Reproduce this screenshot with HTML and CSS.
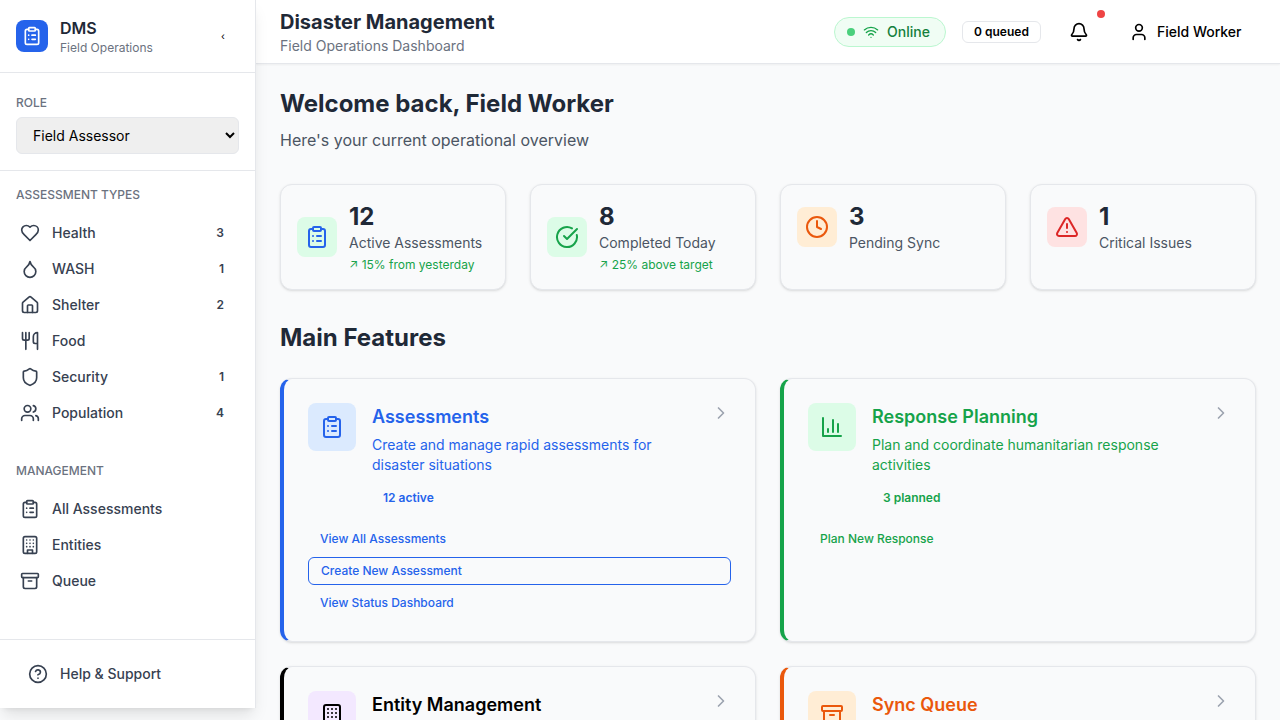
FILE: index.html
```html
<!DOCTYPE html>
<html lang="en">
<head>
<meta charset="utf-8">
<meta name="viewport" content="width=device-width, initial-scale=1">
<title>Disaster Management</title>
<link rel="stylesheet" href="styles.css">
</head>
<body>
<svg class="sprite" aria-hidden="true">
  <symbol id="clipboard" viewBox="0 0 24 24"><rect width="8" height="4" x="8" y="2" rx="1"/><path d="M16 4h2a2 2 0 0 1 2 2v14a2 2 0 0 1-2 2H6a2 2 0 0 1-2-2V6a2 2 0 0 1 2-2h2M12 11h4M12 16h4M8 11h.01M8 16h.01"/></symbol>
  <symbol id="heart" viewBox="0 0 24 24"><path d="M19 14c1.49-1.46 3-3.21 3-5.5A5.5 5.5 0 0 0 16.5 3c-1.76 0-3 .5-4.5 2-1.5-1.5-2.74-2-4.5-2A5.5 5.5 0 0 0 2 8.5c0 2.3 1.5 4.05 3 5.5l7 7Z"/></symbol>
  <symbol id="droplet" viewBox="0 0 24 24"><path d="M12 22a7 7 0 0 0 7-7c0-2-1-3.9-3-5.5s-3.5-4-4-6.5c-.5 2.5-2 4.9-4 6.5C6 11.1 5 13 5 15a7 7 0 0 0 7 7z"/></symbol>
  <symbol id="house" viewBox="0 0 24 24"><path d="M15 21v-8a1 1 0 0 0-1-1h-4a1 1 0 0 0-1 1v8"/><path d="M3 10a2 2 0 0 1 .709-1.528l7-5.999a2 2 0 0 1 2.582 0l7 5.999A2 2 0 0 1 21 10v9a2 2 0 0 1-2 2H5a2 2 0 0 1-2-2z"/></symbol>
  <symbol id="utensils" viewBox="0 0 24 24"><path d="M3 2v7c0 1.1.9 2 2 2h4a2 2 0 0 0 2-2V2M7 2v20M21 15V2a5 5 0 0 0-5 5v6c0 1.1.9 2 2 2h3Zm0 0v7"/></symbol>
  <symbol id="shield" viewBox="0 0 24 24"><path d="M20 13c0 5-3.5 7.5-7.66 8.95a1 1 0 0 1-.67-.01C7.5 20.5 4 18 4 13V6a1 1 0 0 1 1-1c2 0 4.5-1.2 6.24-2.72a1.17 1.17 0 0 1 1.52 0C14.51 3.81 17 5 19 5a1 1 0 0 1 1 1z"/></symbol>
  <symbol id="users" viewBox="0 0 24 24"><path d="M16 21v-2a4 4 0 0 0-4-4H6a4 4 0 0 0-4 4v2M22 21v-2a4 4 0 0 0-3-3.87M16 3.13a4 4 0 0 1 0 7.75"/><circle cx="9" cy="7" r="4"/></symbol>
  <symbol id="building" viewBox="0 0 24 24"><rect width="16" height="20" x="4" y="2" rx="2"/><path d="M9 22v-4h6v4M8 6h.01M16 6h.01M12 6h.01M12 10h.01M12 14h.01M16 10h.01M16 14h.01M8 10h.01M8 14h.01"/></symbol>
  <symbol id="archive" viewBox="0 0 24 24"><rect width="20" height="5" x="2" y="3" rx="1"/><path d="M4 8v11a2 2 0 0 0 2 2h12a2 2 0 0 0 2-2V8M10 12h4"/></symbol>
  <symbol id="help" viewBox="0 0 24 24"><circle cx="12" cy="12" r="10"/><path d="M9.09 9a3 3 0 0 1 5.83 1c0 2-3 3-3 3M12 17h.01"/></symbol>
  <symbol id="wifi" viewBox="0 0 24 24"><path d="M12 20h.01M2 8.82a15 15 0 0 1 20 0M5 12.859a10 10 0 0 1 14 0M8.5 16.429a5 5 0 0 1 7 0"/></symbol>
  <symbol id="bell" viewBox="0 0 24 24"><path d="M10.268 21a2 2 0 0 0 3.464 0M3.262 15.326A1 1 0 0 0 4 17h16a1 1 0 0 0 .74-1.673C19.41 13.956 18 12.499 18 8A6 6 0 0 0 6 8c0 4.499-1.411 5.956-2.738 7.326"/></symbol>
  <symbol id="user" viewBox="0 0 24 24"><path d="M19 21v-2a4 4 0 0 0-4-4H9a4 4 0 0 0-4 4v2"/><circle cx="12" cy="7" r="4"/></symbol>
  <symbol id="check" viewBox="0 0 24 24"><path d="M21.801 10A10 10 0 1 1 17 3.335"/><path d="m9 11 3 3L22 4"/></symbol>
  <symbol id="clock" viewBox="0 0 24 24"><circle cx="12" cy="12" r="10"/><path d="M12 6v6l4 2"/></symbol>
  <symbol id="alert" viewBox="0 0 24 24"><path d="m21.73 18-8-14a2 2 0 0 0-3.48 0l-8 14A2 2 0 0 0 4 21h16a2 2 0 0 0 1.73-3M12 9v4M12 17h.01"/></symbol>
  <symbol id="chart" viewBox="0 0 24 24"><path d="M3 3v18h18M18 17V9M13 17V5M8 17v-3"/></symbol>
  <symbol id="chevron" viewBox="0 0 24 24"><path d="m9 18 6-6-6-6"/></symbol>
</svg>

<div class="app">
  <aside class="sidebar">
    <div class="brand">
      <span class="brand-logo"><svg class="icon"><use href="#clipboard"/></svg></span>
      <div class="brand-text">
        <div class="brand-name">DMS</div>
        <div class="brand-sub">Field Operations</div>
      </div>
      <button class="collapse" type="button" aria-label="Collapse sidebar">‹</button>
    </div>
    <div class="role">
      <label class="caption" for="role">ROLE</label>
      <select class="role-select" id="role"><option>Field Assessor</option></select>
    </div>
    <nav class="nav">
      <section class="nav-group">
        <h2 class="caption nav-title">ASSESSMENT TYPES</h2>
        <a class="nav-item" href="#"><svg class="icon"><use href="#heart"/></svg><span class="nav-label">Health</span><span class="badge">3</span></a>
        <a class="nav-item" href="#"><svg class="icon"><use href="#droplet"/></svg><span class="nav-label">WASH</span><span class="badge">1</span></a>
        <a class="nav-item" href="#"><svg class="icon"><use href="#house"/></svg><span class="nav-label">Shelter</span><span class="badge">2</span></a>
        <a class="nav-item" href="#"><svg class="icon"><use href="#utensils"/></svg><span class="nav-label">Food</span></a>
        <a class="nav-item" href="#"><svg class="icon"><use href="#shield"/></svg><span class="nav-label">Security</span><span class="badge">1</span></a>
        <a class="nav-item" href="#"><svg class="icon"><use href="#users"/></svg><span class="nav-label">Population</span><span class="badge">4</span></a>
      </section>
      <section class="nav-group">
        <h2 class="caption nav-title">MANAGEMENT</h2>
        <a class="nav-item" href="#"><svg class="icon"><use href="#clipboard"/></svg><span class="nav-label">All Assessments</span></a>
        <a class="nav-item" href="#"><svg class="icon"><use href="#building"/></svg><span class="nav-label">Entities</span></a>
        <a class="nav-item" href="#"><svg class="icon"><use href="#archive"/></svg><span class="nav-label">Queue</span></a>
      </section>
    </nav>
    <div class="sidebar-foot">
      <a class="nav-item" href="#"><svg class="icon"><use href="#help"/></svg><span class="nav-label">Help &amp; Support</span></a>
    </div>
  </aside>

  <div class="page">
    <header class="topbar">
      <div class="topbar-text">
        <div class="topbar-title">Disaster Management</div>
        <div class="topbar-sub">Field Operations Dashboard</div>
      </div>
      <div class="topbar-tools">
        <div class="online"><span class="online-dot"></span><svg class="icon icon-sm"><use href="#wifi"/></svg>Online</div>
        <span class="badge badge-outline">0 queued</span>
        <button class="tool" type="button" aria-label="Notifications"><svg class="icon"><use href="#bell"/></svg><span class="tool-dot"></span></button>
        <button class="tool tool-user" type="button"><svg class="icon"><use href="#user"/></svg>Field Worker</button>
      </div>
    </header>

    <main class="content">
      <div class="welcome">
        <h1 class="heading">Welcome back, Field Worker</h1>
        <p class="lead">Here's your current operational overview</p>
      </div>

      <div class="stats">
        <div class="card stat">
          <div class="stat-row">
            <span class="tile tile-green ink-blue"><svg class="icon icon-lg"><use href="#clipboard"/></svg></span>
            <div>
              <div class="stat-value">12</div>
              <div class="stat-label">Active Assessments</div>
              <div class="stat-trend">↗ 15% from yesterday</div>
            </div>
          </div>
        </div>
        <div class="card stat">
          <div class="stat-row">
            <span class="tile tile-green ink-green"><svg class="icon icon-lg"><use href="#check"/></svg></span>
            <div>
              <div class="stat-value">8</div>
              <div class="stat-label">Completed Today</div>
              <div class="stat-trend">↗ 25% above target</div>
            </div>
          </div>
        </div>
        <div class="card stat">
          <div class="stat-row">
            <span class="tile tile-orange ink-orange"><svg class="icon icon-lg"><use href="#clock"/></svg></span>
            <div>
              <div class="stat-value">3</div>
              <div class="stat-label">Pending Sync</div>
            </div>
          </div>
        </div>
        <div class="card stat">
          <div class="stat-row">
            <span class="tile tile-red ink-red"><svg class="icon icon-lg"><use href="#alert"/></svg></span>
            <div>
              <div class="stat-value">1</div>
              <div class="stat-label">Critical Issues</div>
            </div>
          </div>
        </div>
      </div>

      <h2 class="heading features-title">Main Features</h2>
      <div class="features">
        <article class="card feature ink-blue">
          <div class="feature-head">
            <span class="tile tile-lg tile-blue"><svg class="icon icon-lg"><use href="#clipboard"/></svg></span>
            <div class="feature-text">
              <h3 class="feature-title">Assessments</h3>
              <p class="feature-desc">Create and manage rapid assessments for disaster situations</p>
              <span class="badge">12 active</span>
            </div>
            <svg class="icon feature-arrow"><use href="#chevron"/></svg>
          </div>
          <div class="actions">
            <a class="action" href="#">View All Assessments</a>
            <a class="action action-outline" href="#">Create New Assessment</a>
            <a class="action" href="#">View Status Dashboard</a>
          </div>
        </article>
        <article class="card feature ink-green">
          <div class="feature-head">
            <span class="tile tile-lg tile-green"><svg class="icon icon-lg"><use href="#chart"/></svg></span>
            <div class="feature-text">
              <h3 class="feature-title">Response Planning</h3>
              <p class="feature-desc">Plan and coordinate humanitarian response activities</p>
              <span class="badge">3 planned</span>
            </div>
            <svg class="icon feature-arrow"><use href="#chevron"/></svg>
          </div>
          <div class="actions">
            <a class="action" href="#">Plan New Response</a>
          </div>
        </article>
        <article class="card feature ink-black">
          <div class="feature-head">
            <span class="tile tile-lg tile-purple"><svg class="icon icon-lg"><use href="#building"/></svg></span>
            <div class="feature-text">
              <h3 class="feature-title">Entity Management</h3>
            </div>
            <svg class="icon feature-arrow"><use href="#chevron"/></svg>
          </div>
        </article>
        <article class="card feature ink-orange">
          <div class="feature-head">
            <span class="tile tile-lg tile-orange"><svg class="icon icon-lg"><use href="#archive"/></svg></span>
            <div class="feature-text">
              <h3 class="feature-title">Sync Queue</h3>
            </div>
            <svg class="icon feature-arrow"><use href="#chevron"/></svg>
          </div>
        </article>
      </div>
    </main>
  </div>
</div>
</body>
</html>
```

FILE: styles.css
```css
*, *::before, *::after { box-sizing: border-box; }

body {
  margin: 0;
  background: #f9fafb;
  color: #000;
  font: 16px/24px Inter, "Liberation Sans", sans-serif;
}

h1, h2, h3, p { margin: 0; }
a { color: inherit; text-decoration: none; }
button { border: 0; background: none; color: inherit; font: inherit; cursor: pointer; }

.sprite { display: none; }

.icon {
  flex: none;
  width: 20px;
  height: 20px;
  fill: none;
  stroke: currentColor;
  stroke-width: 2;
  stroke-linecap: round;
  stroke-linejoin: round;
}
.icon-sm { width: 16px; height: 16px; }
.icon-lg { width: 24px; height: 24px; }

.app { display: flex; align-items: flex-start; }

/* Sidebar */
.sidebar {
  position: relative;
  z-index: 2;
  flex: none;
  width: 256px;
  background: #fff;
  border-right: 1px solid #e5e7eb;
  box-shadow: 0 10px 15px -3px rgb(0 0 0 / 0.1), 0 4px 6px -4px rgb(0 0 0 / 0.1);
}

.brand {
  display: flex;
  align-items: center;
  gap: 12px;
  padding: 16px;
  border-bottom: 1px solid #e5e7eb;
}
.brand-logo {
  display: grid;
  place-items: center;
  width: 32px;
  height: 32px;
  border-radius: 8px;
  background: #2563eb;
  color: #fff;
}
.brand-text { flex: 1; }
.brand-name { color: #1f2937; font-weight: 600; }
.brand-sub { color: #6b7280; font-size: 12px; line-height: 16px; }
.collapse {
  width: 32px;
  height: 32px;
  padding: 0;
  font-size: 10px;
  font-weight: 400;
}

.caption { color: #6b7280; font-size: 12px; line-height: 16px; font-weight: 500; }

.role {
  display: flex;
  flex-direction: column;
  gap: 6px;
  padding: 22px 16px 16px;
  border-bottom: 1px solid #e5e7eb;
}
.role-select {
  width: 100%;
  height: 37px;
  padding: 8px 0 8px 12px;
  border: 1px solid #e5e7eb;
  border-radius: 6px;
  background: #efefef;
  color: #000;
  font: 14px/20px Inter, "Liberation Sans", sans-serif;
}

.nav {
  display: flex;
  flex-direction: column;
  gap: 32px;
  padding: 16px 8px 40px;
}
.nav-title { padding: 0 8px; margin-bottom: 12px; }
.nav-item {
  display: flex;
  align-items: center;
  gap: 12px;
  height: 36px;
  padding: 0 12px;
  border-radius: 6px;
  color: #374151;
  font-size: 14px;
  line-height: 20px;
  font-weight: 500;
}
.nav-label { flex: 1; }

.badge {
  display: inline-block;
  padding: 2px 10px;
  border: 1px solid transparent;
  border-radius: 6px;
  font-size: 12px;
  line-height: 16px;
  font-weight: 600;
}
.badge-outline { min-width: 79px; border-color: #e5e7eb; text-align: center; }

.sidebar-foot { padding: 16px; border-top: 1px solid #e5e7eb; }

/* Top bar */
.page { flex: 1; min-width: 0; }
.topbar {
  display: flex;
  align-items: center;
  justify-content: space-between;
  height: 64px;
  padding: 0 24px;
  background: #fff;
  border-bottom: 1px solid #e5e7eb;
  box-shadow: 0 1px 2px rgb(0 0 0 / 0.05);
}
.topbar-title { color: #1f2937; font-size: 20px; line-height: 28px; font-weight: 700; }
.topbar-sub { color: #6b7280; font-size: 14px; line-height: 20px; }
.topbar-tools { display: flex; align-items: center; gap: 16px; }
.online {
  display: flex;
  align-items: center;
  gap: 8px;
  min-width: 112px;
  padding: 4px 12px;
  border: 1px solid #bbf7d0;
  border-radius: 999px;
  background: #f0fdf4;
  color: #15803d;
  font-size: 14px;
  line-height: 20px;
  font-weight: 500;
}
.online .icon { color: #16a34a; }
.online-dot { width: 8px; height: 8px; border-radius: 50%; background: #4ad07c; }
.tool {
  position: relative;
  display: flex;
  align-items: center;
  gap: 8px;
  height: 36px;
  padding: 0 12px;
  font-size: 14px;
  line-height: 20px;
  font-weight: 500;
}
.tool-user { min-width: 139px; }
.tool-dot {
  position: absolute;
  top: -4px;
  right: -4px;
  width: 8px;
  height: 8px;
  border-radius: 50%;
  background: #ef4444;
}

/* Content */
.content { padding: 24px; }
.heading { color: #1f2937; font-size: 24px; line-height: 32px; font-weight: 700; }
.welcome { margin-bottom: 32px; }
.lead { margin-top: 8px; color: #4b5563; }

.card {
  border: 1px solid #e5e7eb;
  border-radius: 12px;
  box-shadow: 0 1px 3px rgb(0 0 0 / 0.1), 0 1px 2px -1px rgb(0 0 0 / 0.1);
  background: #f9fafb;
}

.tile {
  display: grid;
  flex: none;
  place-items: center;
  width: 40px;
  height: 40px;
  border-radius: 8px;
}
.tile-lg { width: 48px; height: 48px; }
.tile-green { background: #dcfce7; }
.tile-blue { background: #dbeafe; }
.tile-orange { background: #ffedd5; }
.tile-red { background: #fee2e2; }
.tile-purple { background: #f3e8ff; }

.ink-blue { color: #2563eb; }
.ink-green { color: #16a34a; }
.ink-orange { color: #ea580c; }
.ink-red { color: #dc2626; }
.ink-black { color: #000; }

.stats { display: grid; grid-template-columns: repeat(4, 1fr); gap: 24px; }
.stat { padding: 16px; }
.stat-row { display: flex; align-items: center; gap: 12px; }
.stat-value { color: #1f2937; font-size: 24px; line-height: 32px; font-weight: 700; }
.stat-label { color: #4b5563; font-size: 14px; line-height: 20px; }
.stat-trend { margin-top: 4px; color: #16a34a; font-size: 12px; line-height: 16px; }

.features-title { margin: 32px 0 24px; }
.features { display: grid; grid-template-columns: repeat(2, 1fr); gap: 24px; }
.feature { padding: 24px; border-left: 4px solid currentColor; }
.feature-head { display: flex; align-items: flex-start; gap: 16px; }
.feature-text { flex: 1; }
.feature-title { font-size: 18px; line-height: 28px; font-weight: 600; }
.feature-desc { margin: 4px 0 12px; font-size: 14px; line-height: 20px; }
.feature-text .badge { display: block; }
.feature-arrow { color: #9ca3af; }
.actions { display: flex; flex-direction: column; gap: 4px; margin-top: 16px; }
.action {
  display: flex;
  align-items: center;
  height: 28px;
  padding: 0 12px;
  border-radius: 6px;
  font-size: 12px;
  line-height: 16px;
  font-weight: 500;
}
.action-outline { border: 1px solid currentColor; }
```
